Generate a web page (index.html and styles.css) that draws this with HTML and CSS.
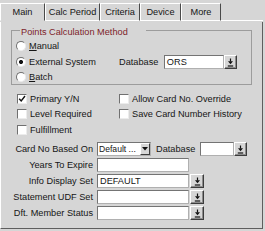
FILE: index.html
```html
<!DOCTYPE html>
<html lang="en">
<head>
    <meta charset="UTF-8">
    <title>Main</title>
    <link rel="stylesheet" href="styles.css">
</head>
<body>
    <div class="dialog">
        <div class="tabs">
            <div class="tab tab-main active">Main</div>
            <div class="tab tab-calc">Calc Period</div>
            <div class="tab tab-criteria">Criteria</div>
            <div class="tab tab-device">Device</div>
            <div class="tab tab-more">More</div>
            <div class="tab-fill"></div>
        </div>
        <div class="panel">
            <fieldset class="group">
                <legend>Points Calculation Method</legend>
                <div class="radio-row">
                    <span class="radio"></span>
                    <span><u>M</u>anual</span>
                </div>
                <div class="radio-row">
                    <span class="radio on"></span>
                    <span class="radio-label">External System</span>
                    <span class="db-label">Database</span>
                    <span class="field w-ors">ORS</span>
                    <span class="lov"><svg width="7" height="9" viewBox="0 0 7 9"><path d="M3.5 0.5v3" stroke="#111" stroke-width="1.2"/><path d="M1 3.2h5l-2.5 3z" fill="#111"/><path d="M0.8 8h5.4" stroke="#111" stroke-width="1.2"/></svg></span>
                </div>
                <div class="radio-row last">
                    <span class="radio"></span>
                    <span><u>B</u>atch</span>
                </div>
            </fieldset>

            <div class="checks">
                <div class="check-row"><span class="check"><svg width="8" height="8" viewBox="0 0 8 8"><path d="M1.2 3.8l2 2.2 3.8-5" fill="none" stroke="#111" stroke-width="1.4"/></svg></span>Primary Y/N</div>
                <div class="check-row"><span class="check"></span>Allow Card No. Override</div>
                <div class="check-row"><span class="check"></span>Level Required</div>
                <div class="check-row"><span class="check"></span>Save Card Number History</div>
                <div class="check-row"><span class="check"></span>Fulfillment</div>
            </div>

            <div class="form">
                <label>Card No Based On</label>
                <div class="controls">
                    <span class="select">
                        <span class="select-text">Default ...</span>
                        <span class="select-btn"><svg width="6" height="4" viewBox="0 0 6 4"><path d="M0 0h6l-3 3.5z" fill="#111"/></svg></span>
                    </span>
                    <span class="db-label">Database</span>
                    <span class="field w-db"></span>
                    <span class="lov"><svg width="7" height="9" viewBox="0 0 7 9"><path d="M3.5 0.5v3" stroke="#111" stroke-width="1.2"/><path d="M1 3.2h5l-2.5 3z" fill="#111"/><path d="M0.8 8h5.4" stroke="#111" stroke-width="1.2"/></svg></span>
                </div>

                <label>Years To Expire</label>
                <div class="controls">
                    <span class="field w-long"></span>
                </div>

                <label>Info Display Set</label>
                <div class="controls">
                    <span class="field w-long">DEFAULT</span>
                    <span class="lov wide"><svg width="7" height="9" viewBox="0 0 7 9"><path d="M3.5 0.5v3" stroke="#111" stroke-width="1.2"/><path d="M1 3.2h5l-2.5 3z" fill="#111"/><path d="M0.8 8h5.4" stroke="#111" stroke-width="1.2"/></svg></span>
                </div>

                <label>Statement UDF Set</label>
                <div class="controls">
                    <span class="field w-long"></span>
                    <span class="lov wide"><svg width="7" height="9" viewBox="0 0 7 9"><path d="M3.5 0.5v3" stroke="#111" stroke-width="1.2"/><path d="M1 3.2h5l-2.5 3z" fill="#111"/><path d="M0.8 8h5.4" stroke="#111" stroke-width="1.2"/></svg></span>
                </div>

                <label>Dft. Member Status</label>
                <div class="controls">
                    <span class="field w-long"></span>
                    <span class="lov wide"><svg width="7" height="9" viewBox="0 0 7 9"><path d="M3.5 0.5v3" stroke="#111" stroke-width="1.2"/><path d="M1 3.2h5l-2.5 3z" fill="#111"/><path d="M0.8 8h5.4" stroke="#111" stroke-width="1.2"/></svg></span>
                </div>
            </div>
        </div>
    </div>
</body>
</html>
```

FILE: styles.css
```css
body {
    margin: 0;
    background: #d6d6d6;
    font-family: 'Liberation Sans', Arial, sans-serif;
    font-size: 9.2px;
    color: #151515;
}
.dialog {
    width: 263px;
}
.tabs {
    display: flex;
    align-items: flex-end;
    height: 21px;
}
.tab {
    box-sizing: border-box;
    height: 18px;
    padding-top: 1px;
    line-height: 15px;
    text-align: center;
    border-top: 1px solid #fff;
    border-left: 1px solid #fff;
    border-right: 1px solid #4a4a4a;
    border-bottom: 1px solid #fff;
}
.tab.active {
    border-bottom-color: transparent;
}
.tab-main { width: 45px; }
.tab-calc { width: 55px; }
.tab-criteria { width: 40px; }
.tab-device { width: 41px; }
.tab-more { width: 40px; }
.tab-fill {
    flex: 1;
    border-bottom: 1px solid #fff;
}
.panel {
    box-sizing: border-box;
    height: 207px;
    border-left: 1px solid #fff;
    border-right: 1px solid #5e5e5e;
    border-bottom: 1px solid #5e5e5e;
}
.group {
    margin: 1px 10px 0 10px;
    padding: 0 4px;
    min-width: 0;
    border: 1px solid #9c9c9c;
}
.group legend {
    box-sizing: border-box;
    width: 126px;
    margin-left: 4px;
    padding: 5px 1px 0 1px;
    line-height: 11px;
    color: #7d1d2a;
}
.radio-row {
    display: flex;
    align-items: center;
    height: 16px;
}
.radio-row.last {
    height: 14px;
}
.radio {
    flex: none;
    box-sizing: border-box;
    width: 10px;
    height: 10px;
    margin-right: 3px;
    border-radius: 50%;
    border: 1px solid;
    border-color: #707070 #ececec #ececec #707070;
    background: #fff;
}
.radio.on {
    background: radial-gradient(circle, #151515 0 1.8px, #fff 2.3px);
}
.radio-label {
    width: 90px;
}
.db-label {
    margin-right: 5px;
}
.field {
    display: inline-block;
    box-sizing: border-box;
    height: 14px;
    padding-left: 2px;
    line-height: 12px;
    background: #fff;
    border: 1px solid;
    border-color: #747474 #b0b0b0 #b0b0b0 #747474;
}
.w-ors { width: 60px; margin-left: 0.5px; }
.w-db { width: 34px; }
.w-long { width: 92px; margin-right: 1px; }
.lov {
    display: flex;
    align-items: center;
    justify-content: center;
    box-sizing: border-box;
    width: 13px;
    height: 14px;
    border: 1px solid;
    border-color: #fff #3c3c3c #3c3c3c #fff;
    box-shadow: inset -1px -1px 0 #8c8c8c;
    background: #d6d6d6;
}
.lov.wide {
    width: 14px;
}
.checks {
    display: grid;
    grid-template-columns: 102px auto;
    grid-auto-rows: 15.5px;
    margin: 6px 0 0 16px;
}
.check-row {
    display: flex;
    align-items: center;
}
.check {
    display: flex;
    align-items: center;
    justify-content: center;
    flex: none;
    box-sizing: border-box;
    width: 10px;
    height: 10px;
    margin-right: 3px;
    background: #fff;
    border: 1px solid;
    border-color: #707070 #ececec #ececec #707070;
}
.form {
    display: grid;
    grid-template-columns: 81px auto;
    grid-auto-rows: 16px;
    column-gap: 4px;
    align-items: center;
    margin: 3.5px 0 0 11px;
}
.form label {
    text-align: right;
    white-space: nowrap;
}
.controls {
    display: flex;
    align-items: center;
}
.select {
    display: flex;
    box-sizing: border-box;
    width: 54px;
    height: 14px;
    margin-right: 5px;
    background: #fff;
    border: 1px solid;
    border-color: #747474 #b0b0b0 #b0b0b0 #747474;
}
.select-text {
    flex: 1;
    padding-left: 1px;
    font-size: 8.6px;
    line-height: 12px;
    overflow: hidden;
    white-space: nowrap;
}
.select-btn {
    display: flex;
    align-items: center;
    justify-content: center;
    box-sizing: border-box;
    width: 10px;
    height: 12px;
    border: 1px solid;
    border-color: #fff #3c3c3c #3c3c3c #fff;
    background: #d6d6d6;
}
```
